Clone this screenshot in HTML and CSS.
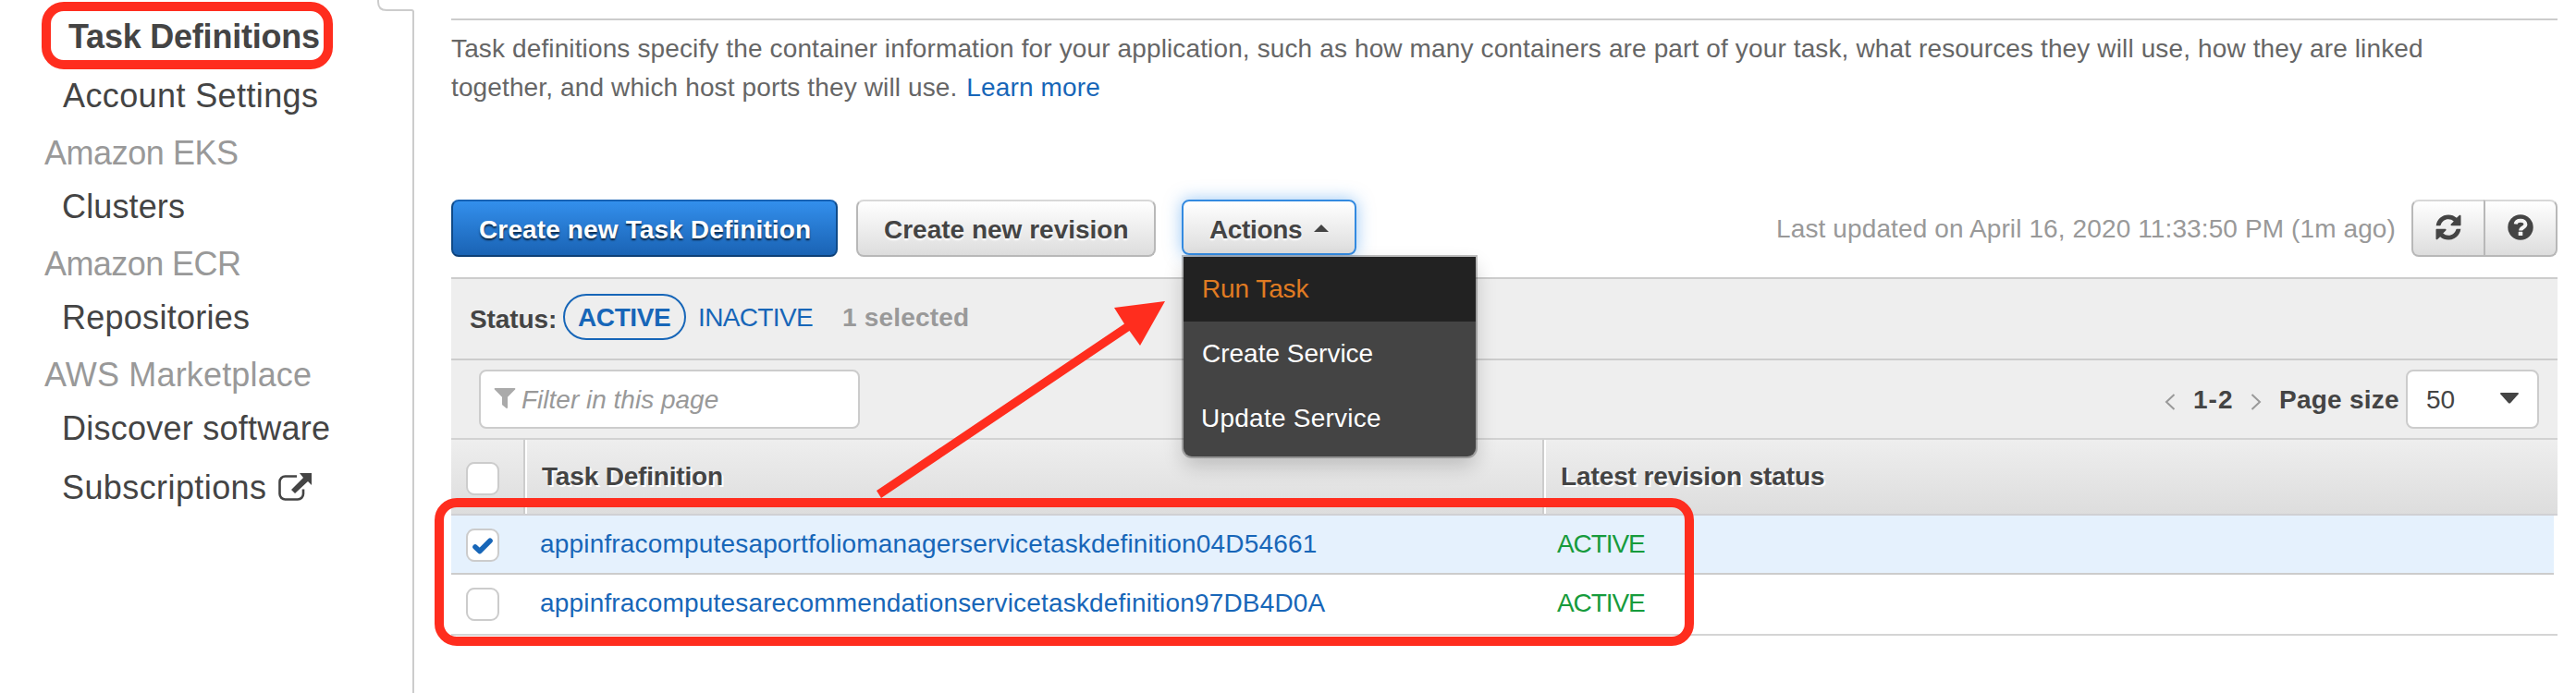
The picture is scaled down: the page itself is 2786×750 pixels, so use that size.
FILE: index.html
```html
<!DOCTYPE html>
<html lang="en">
<head>
<meta charset="utf-8">
<title>Task Definitions</title>
<link rel="stylesheet" href="styles.css">
</head>
<body>
<div class="page">
  <nav class="sidebar">
    <a class="nav-item current">Task Definitions</a>
    <a class="nav-item wide t-account">Account Settings</a>
    <div class="nav-group t-eks">Amazon EKS</div>
    <a class="nav-item t-clusters">Clusters</a>
    <div class="nav-group t-ecr">Amazon ECR</div>
    <a class="nav-item t-repos">Repositories</a>
    <div class="nav-group t-market">AWS Marketplace</div>
    <a class="nav-item t-discover">Discover software</a>
    <a class="nav-item wide t-subs">Subscriptions
      <svg class="external" width="38" height="34" viewBox="0 0 38 34"><path d="M22 5.500H9.500a6 6 0 0 0-6 6v13a6 6 0 0 0 6 6h13.500a6 6 0 0 0 6-6v-5" fill="none" stroke="#444" stroke-width="2.600"/><path d="M25 2h13v13l-4-4-14 13-4-4 13-13z" fill="#444"/></svg>
    </a>
  </nav>
  <div class="divider"></div>
  <main class="content">
    <p class="intro">Task definitions specify the container information for your application, such as how many containers are part of your task, what resources they will use, how they are linked<br>together, and which host ports they will use. <a class="link">Learn more</a></p>
    <div class="toolbar">
      <button class="btn primary">Create new Task Definition</button>
      <button class="btn revision">Create new revision</button>
      <div class="actions">
        <button class="btn open">Actions<svg class="caret" width="16" height="8" viewBox="0 0 16 8"><path d="M8 0l8 8H0z" fill="#444"/></svg></button>
        <div class="menu">
          <div class="menu-item active">Run Task</div>
          <div class="menu-item">Create Service</div>
          <div class="menu-item update">Update Service</div>
        </div>
      </div>
      <span class="updated">Last updated on April 16, 2020 11:33:50 PM (1m ago)</span>
      <div class="btn-group">
        <button class="icon-btn"><svg width="28" height="28" viewBox="0 0 28 28" fill="#444"><path d="M.700 12.200C1.500 5.300 7 .400 14 .400c3.500 0 6.500 1.200 8.900 3.300L25.800 1c.700-.700 1.700-.200 1.700.700v9.500c0 .600-.400 1-1 1h-9c-1 0-1.400-1.100-.700-1.700l3-3A8.500 8.500 0 0 0 14 5.300c-4 0-7.300 2.700-8.300 6.300-.1.400-.4.600-.8.600z"/><path d="M27.300 15.800C26.500 22.700 21 27.600 14 27.600c-3.500 0-6.500-1.200-8.900-3.300L2.200 27C1.500 27.700.500 27.200.500 26.300v-9.500c0-.600.400-1 1-1h9c1 0 1.400 1.100.700 1.700l-3 3A8.500 8.500 0 0 0 14 22.700c4 0 7.300-2.700 8.300-6.300.1-.4.4-.6.8-.6z"/></svg></button>
        <button class="icon-btn"><svg width="28" height="28" viewBox="0 0 28 28"><circle cx="14" cy="14" r="13.700" fill="#444"/><path d="M8.700 10.500C9 7.600 11.200 6.700 14.100 6.700c3 0 5.300 1.500 5.300 4.100 0 3.600-5.200 3.200-5.200 6.700" fill="none" stroke="#f4f4f4" stroke-width="4"/><rect x="11.700" y="18.800" width="4.600" height="4.300" rx=".6" fill="#f4f4f4"/></svg></button>
      </div>
    </div>
    <section class="panel">
      <div class="status-row">
        <span class="status-label">Status:</span>
        <span class="pill">ACTIVE</span>
        <a class="inactive">INACTIVE</a>
        <span class="selected">1 selected</span>
      </div>
      <div class="filter-row">
        <div class="filter"><svg width="24" height="24" viewBox="0 0 24 24"><path d="M1.500 1h21c.8 0 1.200.9.600 1.500L15 10.700V22c0 .9-.9 1.200-1.500.7L9.500 19.500c-.3-.3-.5-.6-.5-1v-7.800L.900 2.500C.300 1.900.700 1 1.500 1z" fill="#aaa"/></svg><span>Filter in this page</span></div>
        <div class="pager">
          <svg class="prev" width="12" height="18" viewBox="0 0 12 18"><path d="M10.500 1L2 9l8.500 8" fill="none" stroke="#999" stroke-width="2"/></svg>
          <span class="range">1-2</span>
          <svg class="next" width="12" height="18" viewBox="0 0 12 18"><path d="M1.500 1L10 9l-8.500 8" fill="none" stroke="#999" stroke-width="2"/></svg>
          <span class="size-label">Page size</span>
          <div class="select"><span>50</span><svg width="20" height="12" viewBox="0 0 20 12"><path d="M1 0h18c.8 0 1.200.8.700 1.400l-8.500 9.600c-.700.700-1.700.700-2.400 0L.3 1.400C-.2.800.2 0 1 0z" fill="#444"/></svg></div>
        </div>
      </div>
    </section>
    <div class="table-head">
      <div class="cell-check"><span class="check"></span></div>
      <div class="head-name">Task Definition</div>
      <div class="head-status">Latest revision status</div>
    </div>
    <div class="row picked">
      <span class="check"><svg width="22" height="18" viewBox="0 0 22 18"><path d="M3 10l4.800 4.500L19 3.200" fill="none" stroke="#1766b8" stroke-width="5.600" stroke-linecap="round" stroke-linejoin="round"/></svg></span>
      <a class="name">appinfracomputesaportfoliomanagerservicetaskdefinition04D54661</a>
      <span class="state">ACTIVE</span>
    </div>
    <div class="row">
      <span class="check"></span>
      <a class="name">appinfracomputesarecommendationservicetaskdefinition97DB4D0A</a>
      <span class="state">ACTIVE</span>
    </div>
  </main>
</div>
<svg class="notch" width="48" height="14" viewBox="0 0 48 14"><path d="M9 0v2q0 9 9 9h27q2 0 2 2v1" fill="none" stroke="#ccc" stroke-width="2"/></svg>
<svg class="marks" width="2786" height="750" viewBox="0 0 2786 750">
  <rect x="50" y="7" width="305" height="63" rx="19" fill="none" stroke="#ff2d1e" stroke-width="10"/>
  <rect x="475" y="544" width="1352" height="150" rx="19" fill="none" stroke="#ff2d1e" stroke-width="10"/>
  <path d="M948 531L1216 350.500 1205 333 1260 326 1233 374 1221.500 358 953 539z" fill="#ff2d1e"/>
</svg>
</body>
</html>
```
FILE: styles.css
```css
* { box-sizing: border-box; }
body {
  margin: 0;
  background: #fff;
  color: #444;
  font: 28px/42px "Liberation Sans", Arial, sans-serif;
  width: 2786px;
  height: 750px;
  overflow: hidden;
  position: relative;
}
svg { display: block; flex: none; }
button { font: inherit; color: inherit; margin: 0; }
.page { display: flex; height: 750px; }

/* Sidebar */
.sidebar {
  width: 446px;
  padding-top: 18px;
  font-size: 36px;
  line-height: 44px;
  white-space: nowrap;
}
.nav-item, .nav-group { display: flex; height: 44px; margin-top: 14px; }
.nav-item { padding-left: 67px; }
.nav-group { margin-top: 18px; padding-left: 48px; color: #999; }
.nav-item.wide { margin-top: 20px; }
.nav-item.current { margin-top: 0; padding-left: 74px; font-weight: bold; letter-spacing: -.224px; }
.nav-item.t-account { padding-left: 68px; letter-spacing: .389px; }
.t-eks { letter-spacing: -.454px; }
.t-clusters { letter-spacing: .139px; }
.t-ecr { letter-spacing: -.564px; }
.t-repos { letter-spacing: .264px; }
.t-market { letter-spacing: .162px; }
.t-discover { letter-spacing: .246px; }
.t-subs { letter-spacing: .408px; }
.external { margin: 4px 0 0 11px; }
.divider { width: 2px; margin-top: 12px; background: #ccc; }
.notch { position: absolute; left: 400px; top: 0; }

/* Main column */
.content { width: 2278px; margin: 20px 0 0 40px; border-top: 2px solid #ccc; }
.intro {
  margin: 0;
  height: 194px;
  padding-top: 10px;
  color: #666;
  letter-spacing: .129px;
  white-space: nowrap;
}
.link { margin-left: 2px; color: #1766b8; }

.toolbar { display: flex; height: 84px; white-space: nowrap; }
.btn {
  display: flex;
  height: 62px;
  padding: 0 0 0 28px;
  border: 2px solid #b8b8b8;
  border-top-color: #d8d8d8;
  border-radius: 8px;
  background: linear-gradient(#fff, #ddd);
  font-weight: bold;
  line-height: 61px;
  text-shadow: 0 2px 2px #fff;
}
.primary {
  width: 418px;
  border-color: #1662b5 #0f4a88 #0d3f76;
  background: linear-gradient(#338fec, #1a63b4);
  color: #fff;
  letter-spacing: .133px;
  text-shadow: 0 2px 2px rgba(0, 0, 0, .7);
}
.revision { width: 324px; margin-left: 20px; }
.actions { position: relative; margin-left: 28px; }
.open {
  width: 189px;
  height: 60px;
  padding-left: 28px;
  border-color: #338ae0;
  box-shadow: 0 0 18px rgba(51, 143, 236, .5);
  letter-spacing: -.351px;
}
.caret { margin: 25px 0 0 13px; }
.menu {
  position: absolute;
  left: 2px;
  top: 62px;
  width: 316px;
  height: 216px;
  border-radius: 0 0 9px 9px;
  background: #444;
  color: #fff;
  box-shadow: 0 0 0 2px rgba(0, 0, 0, .25), 0 10px 22px rgba(0, 0, 0, .2);
}
.menu-item { height: 70px; padding-left: 20px; line-height: 69px; }
.menu-item.active { background: #222; color: #e07b22; letter-spacing: -.102px; }
.menu-item.update { padding-left: 19px; letter-spacing: .241px; }
.updated { margin-left: auto; line-height: 64px; color: #999; letter-spacing: .113px; }
.btn-group { display: flex; margin-left: 17px; }
.icon-btn {
  display: flex;
  width: 80px;
  height: 62px;
  padding: 14px 0 0 24px;
  border: 2px solid #b8b8b8;
  border-top-color: #d8d8d8;
  border-radius: 8px 0 0 8px;
  background: linear-gradient(#fff, #ddd);
}
.icon-btn + .icon-btn { margin-left: -2px; border-radius: 0 8px 8px 0; }

.panel { background: #eee; border-top: 2px solid #ccc; }
.status-row {
  display: flex;
  height: 88px;
  padding: 16px 0 0 20px;
  border-bottom: 2px solid #ccc;
  line-height: 52px;
}
.status-label { width: 101px; padding-top: 2px; font-weight: bold; letter-spacing: -.095px; }
.pill {
  width: 133px;
  height: 50px;
  padding-left: 14px;
  border: 2px solid #1766b8;
  border-radius: 25px;
  color: #1766b8;
  font-weight: bold;
  letter-spacing: -.4px;
  line-height: 48px;
}
.inactive { margin-left: 13px; color: #1766b8; letter-spacing: -.636px; }
.selected { margin-left: 32px; color: #999; font-weight: bold; letter-spacing: .187px; }
.filter-row {
  display: flex;
  justify-content: space-between;
  height: 86px;
  padding: 10px 20px 0 30px;
  border-bottom: 2px solid #d2d2d2;
}
.filter {
  display: flex;
  width: 412px;
  height: 64px;
  padding-left: 14px;
  border: 2px solid #ccc;
  border-radius: 8px;
  background: #fff;
  color: #999;
  font-style: italic;
  line-height: 61px;
}
.filter svg { margin: 17px 6px 0 0; }
.pager { display: flex; line-height: 65px; font-weight: bold; }
.prev { margin-top: 26px; }
.range { margin-left: 19px; width: 60px; letter-spacing: 1px; }
.next { margin: 26px 0 0 2px; }
.size-label { width: 137px; margin-left: 19px; letter-spacing: .243px; }
.select {
  display: flex;
  width: 144px;
  height: 64px;
  padding-left: 20px;
  border: 2px solid #ccc;
  border-radius: 8px;
  background: #fff;
  font-weight: normal;
  line-height: 61px;
}
.select span { width: 80px; }
.select svg { margin-top: 23px; }

/* Table */
.table-head {
  display: flex;
  height: 82px;
  border-bottom: 2px solid #d0d0d3;
  background: linear-gradient(#eee, #ddd);
  font-weight: bold;
  line-height: 80px;
  text-shadow: 2px 2px 0 #fff;
}
.cell-check { width: 80px; padding: 24px 0 0 16px; border-right: 2px solid #ccc; }
.head-name, .head-status { border-left: 2px solid #fff; padding-left: 16px; letter-spacing: -.11px; }
.head-name { width: 1102px; border-right: 2px solid #ccc; letter-spacing: -.179px; }
.check {
  display: block;
  width: 36px;
  height: 36px;
  border: 2px solid #ccc;
  border-radius: 9px;
  background: #fff;
}
.check svg { margin: 8px 0 0 5px; }
.row {
  display: flex;
  width: 2278px;
  height: 66px;
  padding: 14px 0 0 16px;
  border-bottom: 2px solid #d4d4d4;
}
.row.picked { width: 2274px; height: 64px; background: #e5f1fd; border-color: #ccc; }
.name { width: 1100px; margin: -4px 0 0 44px; color: #1766b8; letter-spacing: .175px; }
.state { margin-top: -4px; color: #169b3c; letter-spacing: -1.09px; }

/* Annotations over the page */
.marks { position: absolute; left: 0; top: 0; pointer-events: none; }
```
